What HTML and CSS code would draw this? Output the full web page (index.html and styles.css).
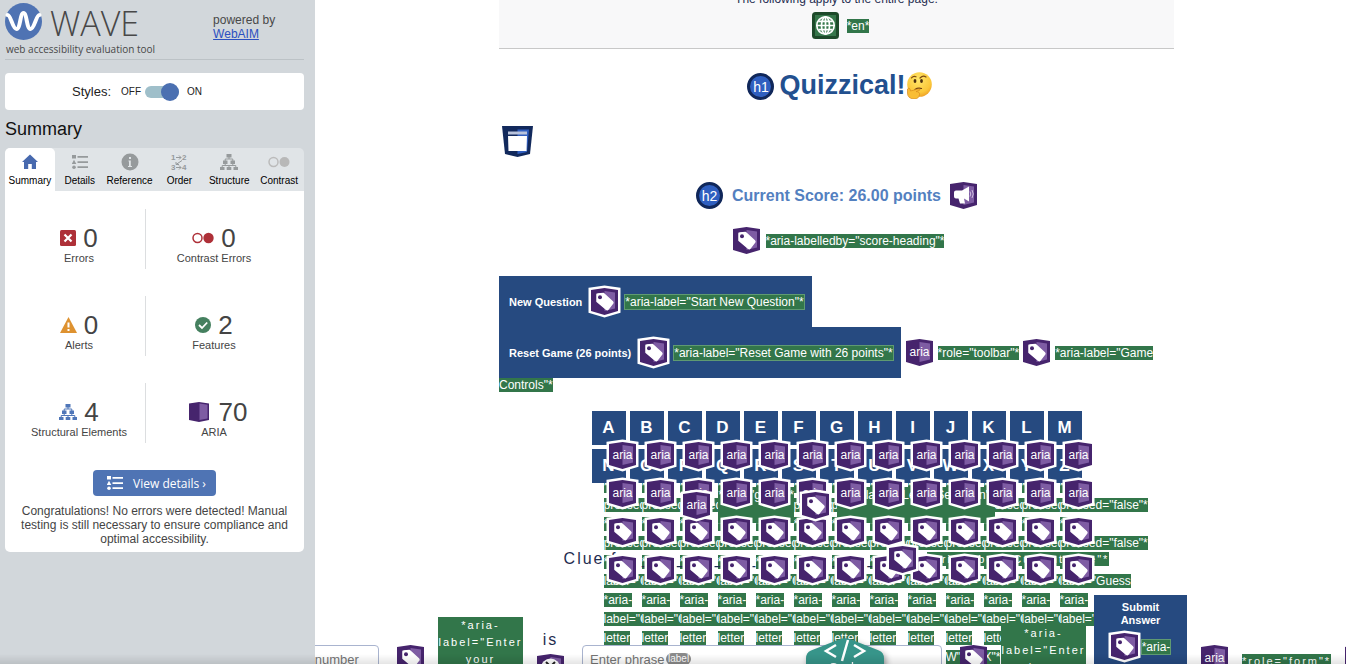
FILE: index.html
```html
<!DOCTYPE html>
<html lang="en">
<head>
<meta charset="utf-8">
<title>Quizzical! - WAVE report</title>
<link rel="stylesheet" href="styles.css">
</head>
<body>
<svg class="defs" aria-hidden="true">
  <symbol id="shell" viewBox="0 0 27 27">
    <polygon class="shell" points="0,2 13.5,0 27,2 27,23 13.5,27 0,23" fill="#46246d"/>
    <polygon points="13.5,3 24,4.5 24,20.500 13.500,23" fill="#7e5ca3" stroke="none"/>
  </symbol>
  <symbol id="aria" viewBox="0 0 27 27">
    <use href="#shell"/>
    <text x="13.500" y="17" text-anchor="middle" class="aria-word">aria</text>
  </symbol>
  <symbol id="tag" viewBox="0 0 27 27">
    <use href="#shell"/>
    <path d="M6 6.500Q6 6 6.500 6L12.500 5.500 21.500 13.800Q22.300 14.600 21.600 15.400L17 21.300Q16.300 22 15.500 21.300L6 13.500Z" fill="#fff" stroke="#fff" stroke-width="1.500" stroke-linejoin="round"/>
    <circle cx="9" cy="9.200" r="2" fill="#46246d" stroke="none"/>
  </symbol>
  <symbol id="horn" viewBox="0 0 27 27">
    <use href="#shell"/>
    <path d="M4 10.500q0-2 2-2h6l7-4v15l-5-3 1 5h-5l-1.500-5H6q-2 0-2-2z" fill="#fff" stroke="none"/>
    <path d="M20 9.500q1.500 2.500 0 5M22 8q2.500 4 0 8" fill="none" stroke="#cfbfe0" stroke-width="1"/>
  </symbol>
  <symbol id="list" viewBox="0 0 16 14">
    <path d="M0 0h4v3.500H0zM2 4.800 4.300 9H-.3zM5.500 1h10.500v1.800H5.500zM5.500 6.300h10.500v1.800H5.500zM5.500 11.300h10.500v1.800H5.500z"/>
    <circle cx="2" cy="12.200" r="1.800"/>
  </symbol>
  <symbol id="tree" viewBox="0 0 18 16">
    <path d="M6.500 0h5v3.500h-5zM3 6.500h4.500V10H3zM10.500 6.500H15V10h-4.500zM0 13h4.500v3H0zM6.700 13h4.600v3H6.700zM13.500 13H18v3h-4.500z"/>
    <path d="M9 3v2M5.200 7V5h7.600v2M5.200 10v1.500M12.800 10v1.500M2.200 13v-1.500h13.600V13M9 11.500V13" fill="none" stroke="currentColor" stroke-width="1"/>
  </symbol>
</svg>

<aside class="sidebar">
  <header class="brand">
    <div>
      <div class="logo">
        <svg width="37" height="37" viewBox="0 0 37 37" aria-hidden="true"><circle cx="18.500" cy="18.500" r="18.500" fill="#4f73b3"/><path d="M2.500 12C6 12 7.500 26 11.500 26S15 10 18.500 10 21.500 26 25.500 26 31 12 34.500 12" fill="none" stroke="#fff" stroke-width="4" stroke-linecap="round"/></svg>
        <span class="wordmark">WAVE</span>
      </div>
      <p class="tagline">web accessibility evaluation tool</p>
    </div>
    <p class="powered">powered by<br><a href="#">WebAIM</a></p>
  </header>

  <section class="styles-panel">
    <span class="styles-name">Styles:</span>
    <label class="switch"><span>OFF</span><input type="checkbox" checked aria-label="Styles"><span>ON</span></label>
  </section>

  <h2 class="side-title">Summary</h2>
  <nav class="tabs">
    <button class="tab active"><svg width="16" height="16" viewBox="0 0 16 16"><path d="M8 .5 16 8h-2v7h-4.200v-5H6.200v5H2V8H0z"/></svg>Summary</button>
    <button class="tab"><svg width="16" height="14"><use href="#list"/></svg>Details</button>
    <button class="tab"><svg width="18" height="18" viewBox="0 0 18 18"><circle cx="9" cy="9" r="8.500"/><path d="M7.500 7.500h2.300V13h1.200v1H7v-1h1V8.500h-.500zM8 4h2v2H8z" fill="#e0e4e7"/></svg>Reference</button>
    <button class="tab"><svg width="18" height="18" viewBox="0 0 18 18"><g class="order-digits"><text x="1" y="7">1</text><text x="12" y="7">2</text><text x="1" y="17">3</text><text x="12" y="17">4</text></g><path d="M6 4.500h5M9 2.500l2 2-2 2M6 14.500h5M9 12.500l2 2-2 2M12 7.500 6 11.500M6 9v2.500h3" fill="none" stroke="currentColor"/></svg>Order</button>
    <button class="tab"><svg width="18" height="16"><use href="#tree"/></svg>Structure</button>
    <button class="tab"><svg width="22" height="12" viewBox="0 0 22 12"><circle cx="5.500" cy="6" r="4.500" fill="none" stroke="#bbb" stroke-width="1.500"/><circle cx="16.500" cy="6" r="5" fill="#b8b8b8"/></svg>Contrast</button>
  </nav>

  <section class="report">
    <ul class="stats">
      <li><div class="count"><svg width="16" height="16" viewBox="0 0 16 16"><rect width="16" height="16" rx="1.500" fill="#ae3038"/><path d="m4.500 4.500 7 7m0-7-7 7" stroke="#fff" stroke-width="2.200"/></svg>0</div>Errors</li>
      <li><div class="count"><svg width="22" height="12" viewBox="0 0 22 12"><circle cx="5.500" cy="6" r="4.500" fill="none" stroke="#ae3038" stroke-width="1.500"/><circle cx="16.500" cy="6" r="5.200" fill="#ae3038"/></svg>0</div>Contrast Errors</li>
      <li><div class="count"><svg width="17" height="16" viewBox="0 0 17 16"><path d="M8.500 0 17 16H0z" fill="#de9230"/><path d="M7.500 5.500h2v5h-2zM7.500 12h2v2h-2z" fill="#fff"/></svg>0</div>Alerts</li>
      <li><div class="count"><svg width="16" height="16" viewBox="0 0 16 16"><circle cx="8" cy="8" r="8" fill="#45805f"/><path d="m4 8 3 3 5.200-5.500" fill="none" stroke="#fff" stroke-width="1.800"/></svg>2</div>Features</li>
      <li><div class="count blue"><svg width="18" height="16"><use href="#tree"/></svg><span>4</span></div>Structural Elements</li>
      <li><div class="count wide"><svg width="20" height="20" viewBox="0 0 20 20"><path d="M0 1.500 10 0v20L0 18z" fill="#46246d"/><path d="M10 0 20 1.500V18L10 20z" fill="#46246d"/><path d="M10.500 1.500 18.500 2.700V16.500L10.500 18z" fill="#7e5ca3"/></svg>70</div>ARIA</li>
    </ul>
    <button class="details"><svg width="16" height="14"><use href="#list"/></svg>View details ›</button>
    <p class="congrats">Congratulations! No errors were detected! Manual testing is still necessary to ensure compliance and optimal accessibility.</p>
  </section>
</aside>

<main class="page">
  <div class="column">
    <div class="page-notes">
      <p>The following apply to the entire page:</p>
      <div class="row">
        <svg width="27" height="27" viewBox="0 0 27 27"><rect width="27" height="27" rx="3.500" fill="#1d4a2a"/><rect x="3" y="3" width="21" height="21" fill="#35764a"/><g fill="none" stroke="#fff" stroke-width="1.700"><circle cx="13.500" cy="13.500" r="8.700"/><ellipse cx="13.500" cy="13.500" rx="4" ry="8.700"/><path d="M13.500 5v17M5 13.500h17M6.500 9.300h14M6.500 17.700h14"/></g></svg>
        <mark>*en*</mark>
      </div>
    </div>

    <div class="title-row">
      <span class="level">h1</span>
      <h1>Quizzical!</h1>
      <svg width="26" height="27" viewBox="0 0 26 27" role="img" aria-label="thinking face">
        <defs><radialGradient id="skin" cx=".45" cy=".3" r=".75"><stop offset="0" stop-color="#ffe66b"/><stop offset=".7" stop-color="#fbc83a"/><stop offset="1" stop-color="#ec9a24"/></radialGradient></defs>
        <circle cx="13.500" cy="12.500" r="12.300" fill="url(#skin)"/>
        <path d="M5.500 5.800q2-2 4.500-1M14 6q3-3 6-1" fill="none" stroke="#7a4a12" stroke-width="1.200" stroke-linecap="round"/>
        <ellipse cx="9" cy="9" rx="1.400" ry="2" fill="#4a2f10"/><ellipse cx="15.500" cy="9" rx="1.400" ry="2" fill="#4a2f10"/>
        <path d="M9 17.500q3-2 6.500-1" fill="none" stroke="#6b3e10" stroke-width="1.200" stroke-linecap="round"/>
        <path d="M1.500 17q1.500-2 2.500 0l.5 2 7.500-2q2.500-.4 2 1l-4 1.600q4 0 3.500 3Q13 27 8 27 1.500 26.500 1.500 21z" fill="#f9bd35" stroke="#d98a1c" stroke-width=".7"/>
      </svg>
    </div>

    <div class="nav-row">
      <svg width="31" height="31" viewBox="0 0 31 31" role="img" aria-label="header"><path d="M0 0h31l-3 28-12.500 3L3 28z" fill="#12295c"/><path d="M15.500 3.500H27L25 26l-9.500 2z" fill="#315fc0"/><path d="M6 5.500h19v3H6z" fill="#b9c3dc"/><path d="M6 10h19l-.5 15h-18z" fill="#fff"/></svg>
    </div>

    <div class="row score-row">
      <span class="level">h2</span>
      <h2 class="score">Current Score: 26.00 points</h2>
      <svg class="badge"><use href="#horn"/></svg>
    </div>

    <div class="row label-row"><svg class="badge"><use href="#tag"/></svg><mark>*aria-labelledby="score-heading"*</mark></div>

    <div class="toolbar">
      <button class="action">New Question <svg class="badge ring"><use href="#tag"/></svg><mark>*aria-label="Start New Question"*</mark></button>
      <div class="toolbar-line">
        <button class="action">Reset Game (26 points) <svg class="badge ring"><use href="#tag"/></svg><mark>*aria-label="Reset Game with 26 points"*</mark></button>
        <svg class="badge"><use href="#aria"/></svg><mark>*role="toolbar"*</mark>
        <svg class="badge"><use href="#tag"/></svg><mark>*aria-label="Game</mark>
      </div>
      <div class="toolbar-rest"><mark>Controls"*</mark></div>
    </div>

    <div class="keyboard" id="keyboard"></div>

    <div class="row group-row">
      <svg class="badge ring"><use href="#aria"/></svg><mark class="tall">*role="group"*</mark>
      <svg class="badge ring"><use href="#tag"/></svg><mark class="tall">*aria-label="Letter Selection"*</mark>
    </div>

    <div class="row clue-row">
      <p class="clue">Clue for _ _ _ _ _ _ _ _ _ _ _ _ _ _</p>
      <svg class="badge ring"><use href="#tag"/></svg>
      <mark class="spaced">*aria-label="Current clue"*</mark>
    </div>
  </div>

  <form class="answer">
    <input class="field number" type="text" placeholder="Enter number" aria-label="Enter your number">
    <svg class="badge"><use href="#tag"/></svg>
    <mark class="block">*aria-label="Enter your question number"*</mark>
    <span class="is">is<svg class="badge" viewBox="0 0 27 27"><use href="#shell"/><circle cx="13.500" cy="14" r="9.500" fill="#fff"/><path d="m9 8 3 3M18 8l-3 3M10 15h7" stroke="#222" stroke-width="2"/></svg></span>
    <span class="phrase-wrap"><input class="field phrase" type="text" placeholder="Enter phrase" aria-label="Enter phrase"><span class="pill">label</span></span>
    <svg class="badge"><use href="#tag"/></svg>
    <span class="pair">
      <mark class="block">*aria-label="Enter phrase here"*</mark>
      <button type="button" class="submit"><span>Submit Answer</span><span class="submit-note"><svg class="badge ring"><use href="#tag"/></svg><mark>*aria-</mark></span></button>
    </span>
    <svg class="badge"><use href="#aria"/></svg>
    <mark class="spaced">*role="form"*</mark>
    <svg class="badge"><use href="#tag"/></svg>
  </form>

  <button class="code" aria-label="Code">
    <svg width="78" height="60" viewBox="0 0 78 60"><path d="M33 1.500q6-2.500 12 0l28 11q5 2 5 8V60H0V20.500q0-6 5-8z" fill="#37958a"/><path d="m30 7-10 6 10 6M48 7l10 6-10 6M42 2l-6 21" fill="none" stroke="#fff" stroke-width="2.500"/></svg>
    <span>Code</span>
  </button>
</main>
<script src="keyboard.js"></script>
</body>
</html>
```

FILE: styles.css
```css
* { box-sizing: border-box; }
body {
  margin: 0;
  height: 100vh;
  display: flex;
  overflow: hidden;
  font-family: "Liberation Sans", Arial, sans-serif;
  font-size: 12px;
  color: #1f2d50;
  background: #fff;
}
body::after {
  content: "";
  position: fixed;
  left: 0; right: 0; bottom: 0;
  height: 10px;
  background: linear-gradient(rgba(0,0,0,0), rgba(0,0,0,.1));
  z-index: 9;
  pointer-events: none;
}
h1, h2, p, ul { margin: 0; padding: 0; }
button { font: inherit; border: 0; padding: 0; }
svg { flex: none; }
symbol { overflow: visible; }
.defs { position: absolute; width: 0; height: 0; }

/* sidebar */
.sidebar {
  flex: none;
  width: 315px;
  padding: 3px 11px 0 5px;
  background: #d2d7db;
  z-index: 5;
}
.brand {
  display: flex;
  gap: 58px;
  height: 57px;
  border-bottom: 1px solid #bcc2c6;
  color: #484848;
}
.logo { display: flex; gap: 8px; height: 38px; }
.wordmark { font: 300 34px/40px "Open Sans", sans-serif; }
.tagline { font: 10px/17px "Open Sans", sans-serif; white-space: nowrap; padding-left: 1px; }
.powered { padding-top: 10px; line-height: 14px; white-space: nowrap; }
.powered a { color: #2b50c0; }
.styles-panel {
  display: flex;
  align-items: center;
  gap: 10px;
  height: 37px;
  margin-top: 13px;
  padding-left: 67px;
  border-radius: 4px;
  background: #fff;
  color: #222;
}
.styles-name { font-size: 13px; }
.switch { display: flex; align-items: center; gap: 4px; font-size: 10px; }
.switch input {
  appearance: none;
  display: flex;
  justify-content: flex-end;
  align-items: center;
  width: 34px;
  height: 12px;
  margin: 0 4px 0 0;
  border-radius: 6px;
  background: #9fbfca;
}
.switch input::before { content: ""; flex: none; width: 18px; height: 18px; border-radius: 50%; background: #4b70b1; }
.side-title { margin-top: 8px; font-size: 18px; font-weight: 400; line-height: 22px; color: #111; }
.tabs {
  display: grid;
  grid-template-columns: repeat(6, 1fr);
  height: 43px;
  margin-top: 8px;
  border-radius: 5px 5px 0 0;
  background: #e0e4e7;
}
.tab {
  display: grid;
  grid-template-rows: 27px 12px;
  place-items: center;
  align-content: start;
  background: none;
  font-size: 10px;
  line-height: 12px;
  color: #000;
}
.tab svg { fill: #969a9c; color: #969a9c; }
.tab.active { background: #fff; border-radius: 5px 5px 0 0; }
.tab.active svg { fill: #4769ae; }
.order-digits { font: 700 8px "Liberation Sans", sans-serif; stroke: none; }
.report {
  height: 361px;
  border-radius: 0 0 5px 5px;
  background: #fff;
  color: #444;
  text-align: center;
  font-size: 11px;
}
.stats {
  display: grid;
  grid-template-columns: 133px 136px;
  row-gap: 27px;
  padding: 18px 0 0 8px;
  list-style: none;
}
.stats li { height: 60px; padding-top: 13px; line-height: 13px; }
.stats li:nth-child(odd) { border-right: 1px solid #dcdee0; }
.count { display: flex; justify-content: center; align-items: center; gap: 7px; height: 32px; margin-bottom: -2px; font-size: 26px; line-height: 32px; }
.count.wide { gap: 10px; padding-left: 8px; }
.count.blue svg { fill: #4f76b8; color: #4f76b8; }
.details {
  display: inline-flex;
  align-items: center;
  gap: 10px;
  height: 26px;
  margin-top: 27px;
  padding: 0 10px 0 14px;
  border-radius: 4px;
  background: #4f74b4;
  color: #fff;
  font: 12px "Open Sans", sans-serif;
}
.details svg { fill: #fff; }
.congrats { padding: 8px 12px 0; font-size: 12px; line-height: 14px; }

/* page */
.page { position: relative; z-index: 0; flex: 1; min-width: 0; padding-left: 12px; overflow: hidden; }
.column { width: 675px; margin: 0 auto; }
.row { display: flex; justify-content: center; align-items: center; }
mark {
  background: #32764a;
  color: #fff;
  line-height: 14px;
  white-space: nowrap;
}
.badge { width: 27px; height: 27px; overflow: visible; }
.ring { stroke: #fff; }
.shell { stroke-width: 5px; paint-order: stroke; }
.aria-word { font: 12px "Liberation Sans", sans-serif; fill: #fff; stroke: none; }
.level {
  width: 27px;
  height: 27px;
  border: 3px solid #10275a;
  border-radius: 50%;
  background: #2f5fc0;
  color: #fff;
  font-size: 14px;
  line-height: 22px;
  text-align: center;
}
.page-notes {
  display: flow-root;
  height: 49px;
  border-bottom: 1px solid #c8c8c8;
  background: #f8f8f9;
  text-align: center;
}
.page-notes p { margin-top: -8px; line-height: 14px; }
.page-notes .row { gap: 8px; margin-top: 6px; padding-left: 8px; }
.title-row { display: flex; justify-content: center; align-items: center; height: 30px; margin-top: 21px; padding-left: 6px; }
.title-row .level { align-self: flex-end; margin-right: 5px; }
.title-row svg { margin-left: 0; }
h1 { font-size: 27px; line-height: 30px; color: #22508f; }
.nav-row { display: flex; height: 31px; margin: 26px 0 25px 3px; }
.score-row { gap: 9px; }
.score { font-size: 16px; line-height: 20px; color: #5380bf; }
.label-row { gap: 6px; margin-top: 18px; padding-left: 4px; }
.toolbar { margin-top: 22px; }
.action {
  display: flex;
  align-items: center;
  gap: 6px;
  height: 51px;
  padding: 0 8px 0 10px;
  background: #264a80;
  color: #fff;
  font-size: 11px;
  font-weight: 700;
  white-space: nowrap;
}
.action .ring { margin: 0 1px 0 3px; }
.action mark { font-weight: 400; font-size: 12px; outline: 1px solid #5f9a72; }
.toolbar-line { display: flex; align-items: center; gap: 5px; }
.toolbar-line > mark { margin-right: -1px; }
.toolbar-rest { line-height: 14px; }

/* letter keys; their notes spill over whatever follows */
.keyboard {
  display: grid;
  grid-template-columns: repeat(13, 34px);
  gap: 4px;
  justify-content: center;
  margin-top: 19px;
}
.key { position: relative; }
.key button { width: 34px; height: 34px; display: block; background: #264a80; color: #fff; font-size: 17px; font-weight: 700; }
.key-notes { position: absolute; left: 12px; top: 66px; line-height: 19px; white-space: pre; z-index: -1; }
.key .badge { position: absolute; left: 17px; z-index: 1; }
.key .badge.first { top: 31px; }
.key .badge.second { top: 107px; }

.group-row { height: 36px; margin-top: 4px; gap: 8px; padding-left: 5px; }
.tall { height: 36px; line-height: 16px; }
.clue-row { height: 30px; margin-top: 21px; gap: 11px; }
.group-row .ring, .clue-row .ring { z-index: 2; }
.clue { font-size: 16px; letter-spacing: 2px; white-space: nowrap; }
.spaced { font-size: 11px; letter-spacing: 2px; }

.answer { position: relative; z-index: 2; display: flex; align-items: center; gap: 14px; height: 132px; margin: 21px 0 0 -55px; }
.answer > * { flex: none; }
.answer > .badge { margin-bottom: 6px; }
.field {
  height: 28px;
  border: 1px solid #a9b4cf;
  border-radius: 4px;
  padding: 0 7px;
  background: #fff;
  font: 13px "Liberation Sans", sans-serif;
}
.field::placeholder { color: #757575; }
.number, .phrase-wrap { margin-bottom: 4px; }
.number { width: 107px; margin-right: 4px; }
.phrase { width: 360px; }
.phrase-wrap { position: relative; margin-left: 4px; margin-right: 4px; }
.pill { position: absolute; left: 84px; top: 8px; padding: 0 2px; border-radius: 8px; background: #8b8b8b; color: #fff; font-size: 10px; line-height: 12px; }
.block { width: 85px; margin-bottom: 4px; font-size: 11px; letter-spacing: 2px; line-height: 17px; white-space: normal; text-align: center; overflow: hidden; }
.is { display: flex; flex-direction: column; align-items: center; gap: 4px; padding-bottom: 12px; font-size: 16px; letter-spacing: 2px; line-height: 20px; }
.pair { display: flex; align-items: center; gap: 8px; }
.submit {
  display: flex;
  flex-direction: column;
  align-items: center;
  gap: 6px;
  width: 93px;
  height: 132px;
  padding: 6px 12px;
  background: #264a80;
  color: #fff;
  font-size: 11px;
  font-weight: 700;
  line-height: 13px;
}
.submit > span:first-child { width: 50px; }
.submit-note { display: flex; align-items: center; gap: 4px; }
.submit-note mark { font-weight: 400; font-size: 12px; outline: 1px solid #5f9a72; }
.code { position: absolute; left: 491px; bottom: -34px; width: 78px; height: 60px; background: none; color: #fff; z-index: 3; filter: drop-shadow(2px 3px 3px rgba(0,0,0,.4)); }
.code span { position: absolute; left: 0; right: 0; top: 22px; font-size: 14px; }
```

FILE: keyboard.js
```js
const keyboard = document.getElementById('keyboard');
for (const letter of 'ABCDEFGHIJKLMNOPQRSTUVWXYZ') {
  const key = document.createElement('div');
  key.className = 'key';
  const lines = ['*aria-', 'pressed="false"*', '', '', '*aria-', 'label="Guess', 'letter', letter + '"*'];
  key.innerHTML =
    '<button type="button">' + letter + '</button>' +
    '<div class="key-notes">' + lines.map(t => t ? '<mark>' + t + '</mark>' : '').join('\n') + '</div>' +
    '<svg class="badge ring first"><use href="#aria"/></svg>' +
    '<svg class="badge ring second"><use href="#tag"/></svg>';
  keyboard.append(key);
}
```
